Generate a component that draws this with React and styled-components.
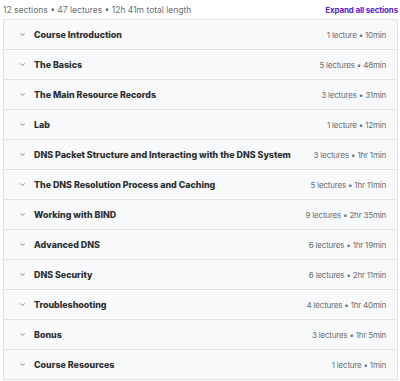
import React from "react";
import styled, { createGlobalStyle } from "styled-components";

const GlobalStyle = createGlobalStyle`
  body {
    margin: 0;
    background: #ffffff;
    font-family: Inter, "Liberation Sans", sans-serif;
    color: #2d2f31;
  }
`;

const Page = styled.div`
  width: 400px;
  padding: 0 2px 0 3px;
  box-sizing: border-box;
`;

const Summary = styled.div`
  display: flex;
  justify-content: space-between;
  align-items: center;
  height: 19px;
  font-size: 8.5px;
  color: #6a6f73;
`;

const ExpandAll = styled.button`
  border: none;
  background: none;
  padding: 0;
  font-family: inherit;
  font-size: 8px;
  font-weight: 700;
  letter-spacing: -0.15px;
  color: #5624d0;
  cursor: pointer;
`;

const Sections = styled.div`
  border: 1px solid #e0e3e6;
  border-bottom: none;
  background: #f7f9fa;
`;

const SectionRow = styled.div`
  display: flex;
  align-items: center;
  height: 29px;
  border-bottom: 1px solid #e0e3e6;
  padding: 0 11px 0 15px;
`;

const Chevron = styled.svg`
  width: 7px;
  height: 7px;
  margin-right: 8px;
  flex-shrink: 0;
`;

const Title = styled.span`
  flex: 1;
  font-size: 8.9px;
  font-weight: 800;
  color: #2d2f31;
`;

const Meta = styled.span`
  font-size: 8px;
  letter-spacing: -0.2px;
  color: #6a6f73;
  white-space: nowrap;
`;

const sections = [
  ["Course Introduction", "1 lecture • 10min"],
  ["The Basics", "5 lectures • 48min"],
  ["The Main Resource Records", "3 lectures • 31min"],
  ["Lab", "1 lecture • 12min"],
  ["DNS Packet Structure and Interacting with the DNS System", "3 lectures • 1hr 1min"],
  ["The DNS Resolution Process and Caching", "5 lectures • 1hr 11min"],
  ["Working with BIND", "9 lectures • 2hr 35min"],
  ["Advanced DNS", "6 lectures • 1hr 19min"],
  ["DNS Security", "6 lectures • 2hr 11min"],
  ["Troubleshooting", "4 lectures • 1hr 40min"],
  ["Bonus", "3 lectures • 1hr 5min"],
  ["Course Resources", "1 lecture • 1min"],
];

export default function App() {
  return (
    <Page>
      <GlobalStyle />
      <Summary>
        <span>12 sections • 47 lectures • 12h 41m total length</span>
        <ExpandAll>Expand all sections</ExpandAll>
      </Summary>
      <Sections>
        {sections.map(([title, meta]) => (
          <SectionRow key={title}>
            <Chevron viewBox="0 0 8 8">
              <path d="M1.5 2.8 L4 5.2 L6.5 2.8" fill="none" stroke="#6a6f73" strokeWidth="0.9" />
            </Chevron>
            <Title>{title}</Title>
            <Meta>{meta}</Meta>
          </SectionRow>
        ))}
      </Sections>
    </Page>
  );
}
